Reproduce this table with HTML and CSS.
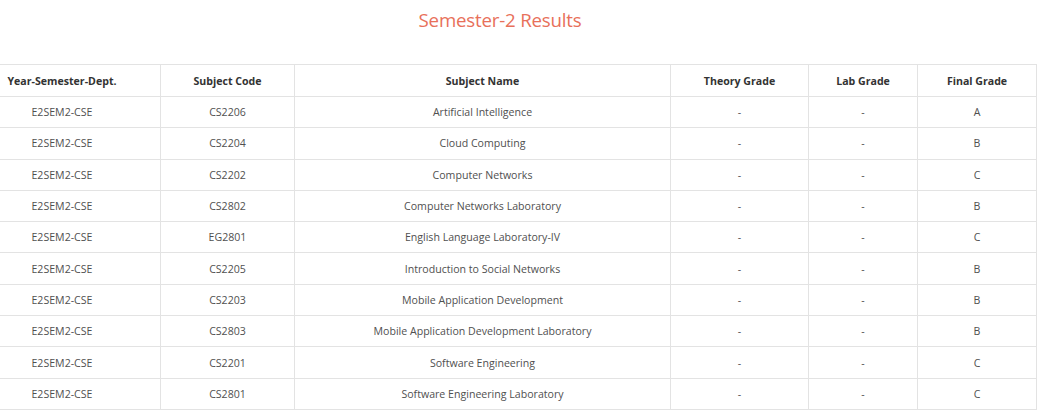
FILE: index.html
```html
<!DOCTYPE html>
<html>
<head>
<meta charset="utf-8">
<link rel="stylesheet" href="styles.css">
</head>
<body>
<h2 class="title">Semester-2 Results</h2>
<table class="results">
<thead>
<tr><th class="c1">Year-Semester-Dept.</th><th class="c2">Subject Code</th><th class="c3">Subject Name</th><th class="c4">Theory Grade</th><th class="c5">Lab Grade</th><th class="c6">Final Grade</th></tr>
</thead>
<tbody>
<tr><td>E2SEM2-CSE</td><td>CS2206</td><td>Artificial Intelligence</td><td>-</td><td>-</td><td>A</td></tr>
<tr><td>E2SEM2-CSE</td><td>CS2204</td><td>Cloud Computing</td><td>-</td><td>-</td><td>B</td></tr>
<tr><td>E2SEM2-CSE</td><td>CS2202</td><td>Computer Networks</td><td>-</td><td>-</td><td>C</td></tr>
<tr><td>E2SEM2-CSE</td><td>CS2802</td><td>Computer Networks Laboratory</td><td>-</td><td>-</td><td>B</td></tr>
<tr><td>E2SEM2-CSE</td><td>EG2801</td><td>English Language Laboratory-IV</td><td>-</td><td>-</td><td>C</td></tr>
<tr><td>E2SEM2-CSE</td><td>CS2205</td><td>Introduction to Social Networks</td><td>-</td><td>-</td><td>B</td></tr>
<tr><td>E2SEM2-CSE</td><td>CS2203</td><td>Mobile Application Development</td><td>-</td><td>-</td><td>B</td></tr>
<tr><td>E2SEM2-CSE</td><td>CS2803</td><td>Mobile Application Development Laboratory</td><td>-</td><td>-</td><td>B</td></tr>
<tr><td>E2SEM2-CSE</td><td>CS2201</td><td>Software Engineering</td><td>-</td><td>-</td><td>C</td></tr>
<tr><td>E2SEM2-CSE</td><td>CS2801</td><td>Software Engineering Laboratory</td><td>-</td><td>-</td><td>C</td></tr>
</tbody>
</table>
</body>
</html>
```
FILE: styles.css
```css
html, body {
  margin: 0;
  padding: 0;
  background: #fff;
}
body {
  font-family: "Open Sans", "Noto Sans", sans-serif;
  color: #444;
}
.title {
  margin: 0;
  width: 1000px;
  height: 64px;
  padding-top: 7px;
  box-sizing: border-box;
  text-align: center;
  font-size: 18.7px;
  font-weight: 400;
  color: #e8705a;
  letter-spacing: -0.2px;
}
.results {
  width: 1036px;
  border-collapse: collapse;
  font-size: 10.6px;
  table-layout: fixed;
}
.results th, .results td {
  border: 1px solid #e3e3e3;
  text-align: center;
  padding: 0;
  height: 30.3px;
  color: #505050;
}
.results th {
  font-weight: 700;
  color: #333;
  height: 31px;
}
.results tr > :first-child {
  border-left: none;
  padding-right: 36px;
}
.c1 { width: 124px; }
.c2 { width: 133px; }
.c3 { width: 375px; }
.c4 { width: 137px; }
.c5 { width: 108px; }
.c6 { width: 118px; }
```
